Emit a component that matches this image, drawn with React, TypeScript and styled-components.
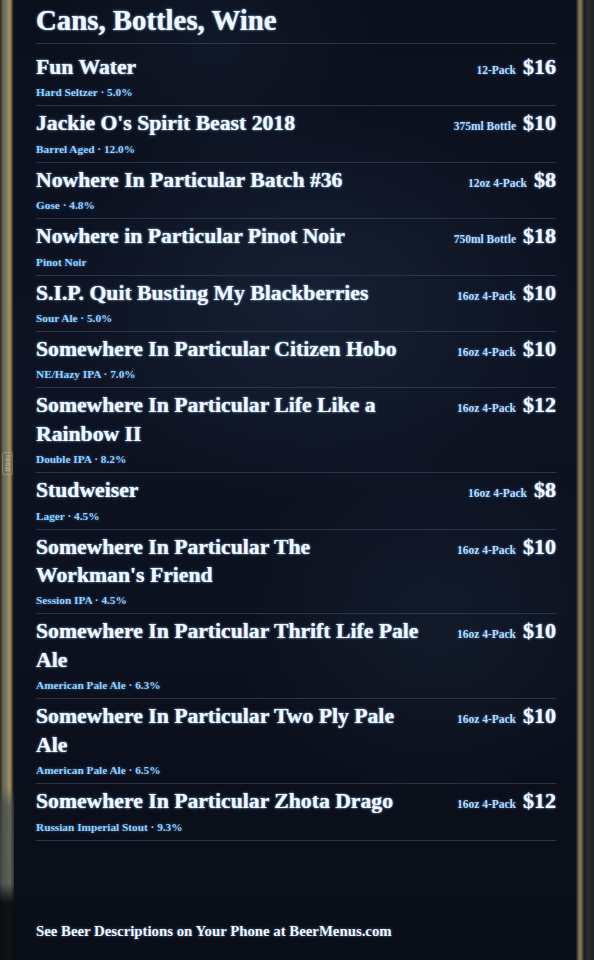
import React from "react";
import styled, { createGlobalStyle } from "styled-components";

const GlobalStyle = createGlobalStyle`
  html, body {
    margin: 0;
    padding: 0;
    background: #0a0d16;
  }
`;

interface IBeer {
  name: string;
  style: string;
  size: string;
  price: string;
}

const beers: IBeer[] = [
  { name: "Fun Water", style: "Hard Seltzer · 5.0%", size: "12-Pack", price: "$16" },
  { name: "Jackie O's Spirit Beast 2018", style: "Barrel Aged · 12.0%", size: "375ml Bottle", price: "$10" },
  { name: "Nowhere In Particular Batch #36", style: "Gose · 4.8%", size: "12oz 4-Pack", price: "$8" },
  { name: "Nowhere in Particular Pinot Noir", style: "Pinot Noir", size: "750ml Bottle", price: "$18" },
  { name: "S.I.P. Quit Busting My Blackberries", style: "Sour Ale · 5.0%", size: "16oz 4-Pack", price: "$10" },
  { name: "Somewhere In Particular Citizen Hobo", style: "NE/Hazy IPA · 7.0%", size: "16oz 4-Pack", price: "$10" },
  { name: "Somewhere In Particular Life Like a\nRainbow II", style: "Double IPA · 8.2%", size: "16oz 4-Pack", price: "$12" },
  { name: "Studweiser", style: "Lager · 4.5%", size: "16oz 4-Pack", price: "$8" },
  { name: "Somewhere In Particular The\nWorkman's Friend", style: "Session IPA · 4.5%", size: "16oz 4-Pack", price: "$10" },
  { name: "Somewhere In Particular Thrift Life Pale\nAle", style: "American Pale Ale · 6.3%", size: "16oz 4-Pack", price: "$10" },
  { name: "Somewhere In Particular Two Ply Pale\nAle", style: "American Pale Ale · 6.5%", size: "16oz 4-Pack", price: "$10" },
  { name: "Somewhere In Particular Zhota Drago", style: "Russian Imperial Stout · 9.3%", size: "16oz 4-Pack", price: "$12" },
];

const Frame = styled.div`
  display: flex;
  width: 594px;
  height: 960px;
  overflow: hidden;
  font-family: "Liberation Serif", "DejaVu Serif", serif;
  font-weight: 700;
`;

const LeftBezel = styled.div`
  position: relative;
  width: 14px;
  flex-shrink: 0;
  background:
    linear-gradient(180deg, rgba(0,0,0,0) 0%, rgba(0,0,0,0) 82%, rgba(60,70,72,0.6) 84%, rgba(70,78,78,0.7) 92%, rgba(10,12,16,0.95) 94%),
    linear-gradient(90deg, #2a2418 0px, #6a6656 3px, #7d7a68 7px, #a39262 9px, #8c7c52 11px, #1c1c20 13px);
`;

const BezelMark = styled.span`
  position: absolute;
  left: 2px;
  top: 452px;
  padding: 2px 0;
  width: 9px;
  writing-mode: vertical-rl;
  font-family: "DejaVu Sans", sans-serif;
  font-size: 7px;
  font-weight: 400;
  color: #c9c6b8;
  letter-spacing: 0.5px;
  border: 1px solid rgba(200, 196, 180, 0.35);
  border-radius: 2px;
`;

const RightBezel = styled.div`
  width: 18px;
  flex-shrink: 0;
  background: linear-gradient(90deg, #121418 0px, #5e5444 2px, #8a7a5e 4px, #6c604c 6px, #1c1d22 8px, #2a2b30 12px, #202126 18px);
`;

const Screen = styled.div`
  flex: 1;
  display: flex;
  flex-direction: column;
  padding: 0 20px 0 22px;
  background:
    radial-gradient(ellipse 260px 200px at 300px 300px, rgba(40, 56, 84, 0.35), transparent),
    radial-gradient(ellipse 200px 180px at 420px 620px, rgba(34, 48, 72, 0.3), transparent),
    radial-gradient(ellipse 160px 140px at 200px 40px, rgba(30, 44, 66, 0.25), transparent),
    linear-gradient(180deg, #0b101d 0%, #0d1322 40%, #0b101c 75%, #0a0e19 100%);
`;

const Header = styled.h1`
  margin: 0;
  padding: 2px 0 5px;
  font-size: 28.8px;
  line-height: 36px;
  font-weight: 700;
  color: #f3f7ff;
  text-shadow: 0 0 3px rgba(130, 185, 255, 0.75), 0 0 1px #cfe4ff;
  border-bottom: 1px solid #2b3447;
`;

const List = styled.div`
  display: flex;
  flex-direction: column;
`;

const Row = styled.div`
  display: flex;
  align-items: baseline;
  justify-content: space-between;
  padding: 3px 0 6px;
  border-bottom: 1px solid #2b3447;

  &:first-child {
    padding-top: 9px;
  }
`;

const Info = styled.div`
  display: flex;
  flex-direction: column;
  min-width: 0;
`;

const Name = styled.div`
  font-size: 21.7px;
  line-height: 28.4px;
  white-space: pre;
  color: #f4f8ff;
  text-shadow: 0 0 3px rgba(130, 185, 255, 0.75), 0 0 1px #cfe4ff;
`;

const Style = styled.div`
  margin-top: 4px;
  font-size: 11.3px;
  line-height: 14px;
  color: #8fd3ff;
  text-shadow: 0 0 3px rgba(90, 170, 255, 0.6);
`;

const PriceBlock = styled.div`
  display: flex;
  align-items: baseline;
  gap: 7px;
  flex-shrink: 0;
`;

const Size = styled.span`
  font-size: 11.5px;
  color: #b4dcff;
  text-shadow: 0 0 3px rgba(90, 170, 255, 0.6);
`;

const Price = styled.span`
  font-size: 22px;
  color: #f4f8ff;
  text-shadow: 0 0 3px rgba(130, 185, 255, 0.75), 0 0 1px #cfe4ff;
`;

const Footer = styled.div`
  margin-top: auto;
  padding-bottom: 19px;
  font-size: 14.8px;
  line-height: 20px;
  color: #f4f8ff;
  text-shadow: 0 0 3px rgba(130, 185, 255, 0.6);
`;

const BeerRow: React.FC<IBeer> = ({ name, style, size, price }) => (
  <Row>
    <Info>
      <Name>{name}</Name>
      <Style>{style}</Style>
    </Info>
    <PriceBlock>
      <Size>{size}</Size>
      <Price>{price}</Price>
    </PriceBlock>
  </Row>
);

const App: React.FC = () => {
  return (
    <>
      <GlobalStyle />
      <Frame>
        <LeftBezel>
          <BezelMark>loop</BezelMark>
        </LeftBezel>
        <Screen>
          <Header>Cans, Bottles, Wine</Header>
          <List>
            {beers.map((b) => (
              <BeerRow key={b.name} {...b} />
            ))}
          </List>
          <Footer>See Beer Descriptions on Your Phone at BeerMenus.com</Footer>
        </Screen>
        <RightBezel />
      </Frame>
    </>
  );
};

export default App;
